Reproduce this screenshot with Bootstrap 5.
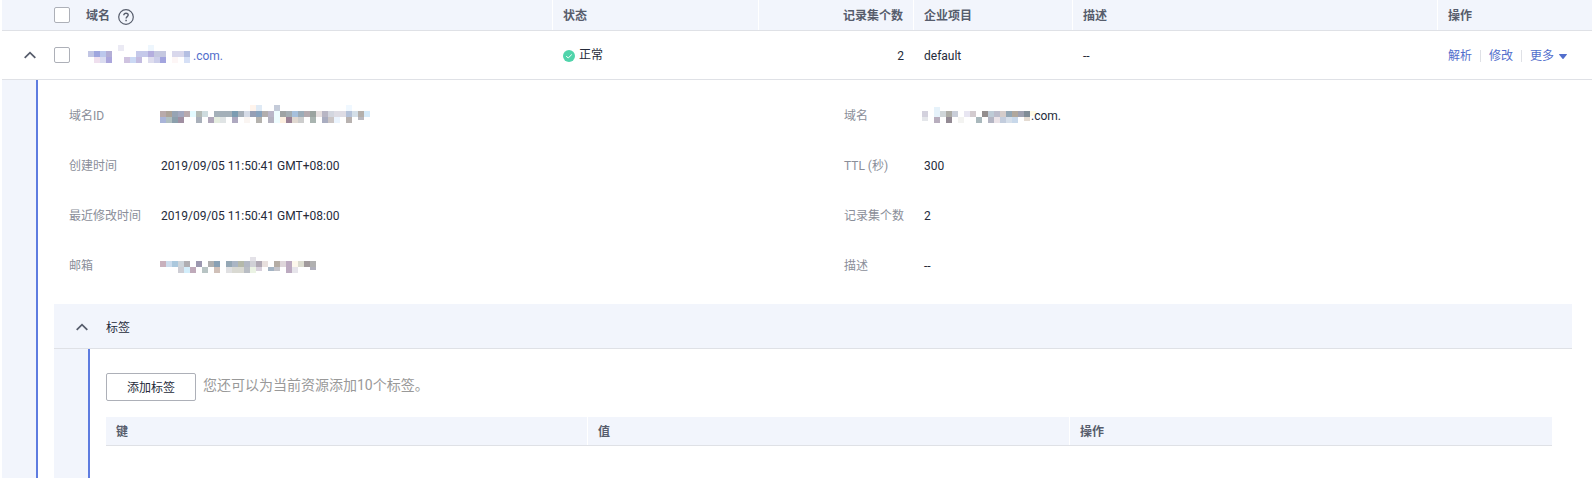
<!DOCTYPE html>
<html lang="zh-CN">
<head>
<meta charset="utf-8">
<meta name="viewport" content="width=device-width, initial-scale=1">
<title>域名</title>
<link href="https://cdn.jsdelivr.net/npm/bootstrap@5.3.0/dist/css/bootstrap.min.css" rel="stylesheet">
<style>
body{font:12px/18px Roboto,"Noto Sans CJK SC",sans-serif;color:#252b3a;background:#fff}
.page{height:478px;padding:0 2px}
.zone-grid{display:grid;grid-template-columns:42px 32px 477px 206px 155px 159px 365px 154px}
.tag-grid{display:grid;grid-template-columns:482px 482px 482px}
.head-row{background:#f2f5fc;color:#575d6c;font-weight:700;border-bottom:1px solid #dfe1e6}
.head-row>*{border-right:1px solid #fff;padding:2px 10px 0}
.head-row>.plain,.head-row>:last-child{border-right:0}
.head-row>.plain{padding-top:0}
.zone-grid.head-row{height:31px}
.data-row{height:49px;border-bottom:1px solid #dfe1e6}
.data-row>*{padding:2px 10px 0}
.data-row>.control{padding-top:0}
.state{margin-top:-2px}
.tag-grid.head-row{height:29px}
.form-check-input.box{width:16px;height:16px;margin:0;border:1px solid #adb0b8;border-radius:2px;background-color:#fff;flex:none}
.gutter{width:36px;background:#f2f5fc;border-right:2px solid #5e7ce0}
a{color:#526ecc;text-decoration:none}
.vline{width:1px;height:12px;background:#dfe1e6;margin:0 8px}
.info{display:grid;grid-template-columns:92px 683px 80px 1fr;grid-auto-rows:50px;padding:11px 0 0 31px;height:224px}
.info>*{display:flex;align-items:center}
.info>.key{color:#8a8e99}
.tag-panel{margin:0 20px 0 16px}
.tag-head{height:45px;background:#f2f5fc;border-bottom:1px solid #dfe1e6;padding:2px 0 0 22px;gap:18px}
.tag-head span{padding-top:2px}
.tag-body{padding:24px 20px 0 16px}
.btn.add-btn{width:90px;height:28px;font-size:12px;line-height:18px;padding:2px 0 0;border:1px solid #adb0b8;border-radius:2px;color:#252b3a}
.hint{font-size:14px;line-height:20px;color:#999;margin:2px 0 0 7px}
svg{display:block;flex:none}
.help-icon{margin-top:1px}
.mosaic{shape-rendering:crispEdges;overflow:visible;margin:0 0 4px -1px}
#m-name{margin-left:2px}
#m-domain{margin-left:-2px}
</style>
</head>
<body>
<div class="page d-flex flex-column overflow-hidden">
  <div class="zone-grid head-row align-items-stretch">
    <div class="plain"></div>
    <div class="plain d-flex align-items-center"><input class="form-check-input box" type="checkbox" aria-label="全选"></div>
    <div class="d-flex align-items-center gap-2"><span>域名</span>
      <svg class="help-icon" width="16" height="16" viewBox="0 0 16 16" fill="none" stroke="#575d6c" stroke-width="1.2"><circle cx="8" cy="8" r="7.3"/><path d="M5.8 6.3C5.8 5 6.7 4.2 8 4.2s2.2.8 2.2 1.9c0 1.5-2.1 1.6-2.1 3.3" stroke-width="1.4"/><path d="M8.1 10.7v1.5" stroke-width="1.5"/></svg></div>
    <div class="d-flex align-items-center">状态</div>
    <div class="d-flex align-items-center justify-content-end">记录集个数</div>
    <div class="d-flex align-items-center">企业项目</div>
    <div class="d-flex align-items-center">描述</div>
    <div class="d-flex align-items-center">操作</div>
  </div>
  <div class="zone-grid data-row">
    <div class="control d-flex align-items-center justify-content-end pe-2"><svg width="12" height="8" viewBox="0 0 12 8" fill="none" stroke="#575d6c" stroke-width="1.8"><path d="M.7 6.8 6 1.7l5.3 5.1"/></svg></div>
    <div class="control d-flex align-items-center"><input class="form-check-input box" type="checkbox" aria-label="选择"></div>
    <div class="d-flex align-items-center"><svg class="mosaic" id="m-name" width="105" height="18"></svg><a href="#">.com.</a></div>
    <div class="d-flex align-items-center"><svg width="12" height="12" viewBox="0 0 12 12" class="me-1"><circle cx="6" cy="6" r="6" fill="#50d4ab"/><path d="m3.2 6 2 2 3.6-3.5" fill="none" stroke="#fff" stroke-width="1"/></svg><span class="state">正常</span></div>
    <div class="d-flex align-items-center justify-content-end">2</div>
    <div class="d-flex align-items-center">default</div>
    <div class="d-flex align-items-center">--</div>
    <div class="d-flex align-items-center"><a href="#">解析</a><span class="vline"></span><a href="#">修改</a><span class="vline"></span><a href="#" class="d-flex align-items-center">更多<svg width="9" height="5" viewBox="-1 0 9 5" class="ms-1"><path d="M.4 0h7.2q.5.3.2.8L4.5 4.7q-.5.4-1 0L.2.8Q-.1.3.4 0z" fill="#526ecc"/></svg></a></div>
  </div>
  <div class="d-flex flex-grow-1">
    <div class="gutter flex-shrink-0"></div>
    <div class="flex-grow-1 d-flex flex-column">
      <div class="info">
        <div class="key">域名ID</div><div><svg class="mosaic" id="m-id" width="210" height="18"></svg></div>
        <div class="key">域名</div><div><svg class="mosaic" id="m-domain" width="109" height="18"></svg>.com.</div>
        <div class="key">创建时间</div><div>2019/09/05 11:50:41 GMT+08:00</div>
        <div class="key">TTL (秒)</div><div>300</div>
        <div class="key">最近修改时间</div><div>2019/09/05 11:50:41 GMT+08:00</div>
        <div class="key">记录集个数</div><div>2</div>
        <div class="key">邮箱</div><div><svg class="mosaic" id="m-mail" width="158" height="18"></svg></div>
        <div class="key">描述</div><div>--</div>
      </div>
      <div class="tag-panel flex-grow-1 d-flex flex-column">
        <div class="tag-head d-flex align-items-center"><svg width="12" height="8" viewBox="0 0 12 8" fill="none" stroke="#575d6c" stroke-width="1.8"><path d="M.7 6.8 6 1.7l5.3 5.1"/></svg><span>标签</span></div>
        <div class="d-flex flex-grow-1">
          <div class="gutter flex-shrink-0"></div>
          <div class="tag-body flex-grow-1">
            <div class="d-flex align-items-start mb-3"><button class="btn add-btn" type="button">添加标签</button><p class="hint">您还可以为当前资源添加10个标签。</p></div>
            <div class="tag-grid head-row">
              <div class="d-flex align-items-center">键</div>
              <div class="d-flex align-items-center">值</div>
              <div class="d-flex align-items-center">操作</div>
            </div>
          </div>
        </div>
      </div>
    </div>
  </div>
</div>
<script src="https://cdn.jsdelivr.net/npm/bootstrap@5.3.0/dist/js/bootstrap.bundle.min.js"></script>
<script>
// Redaction mosaics: three rows of 6px cells. "-" leaves a cell empty, "-n" skips n cells,
// "/h" sets the height of a partly covered cell.
const mosaics = {
  'm-name': ['-5 ebeaf4 -4 eef6fd',
    'c2c6e4 9fa6de bcc8ec b3aed6 -4 c5c9ea c5c9ea b4aede c5c8e0 c5c8e0 - d9d8ec d9d8ec b4bfe2',
    '- efdfee dadcf0 aba6dc -2 cfc3e0 cbd9f4 c3bce0 - deddee ccceea a2a4de - fdf6f6 - d6e0f6'],
  'm-id': ['-15 fff4ec dfeaf5 -2 c4cbd9 -11 f0f8ff',
    'b8aaaa aca398 97a4b4 a2a8bf b8aaae e4fbff b4bbb6 cedcdf - a4b0b9 a4b0b9 a4b0b9 7c9cb2 a7b0ba d5dbe7 969fb5 87a2bd b2aeae bab6c8 effdff 9ea3a3 a3adb2 a6c0dc 9cacb8 b4aaaf 9aa39f e6dfdf b8b6c4 d3d6df dedce4 dedce4 b4c2d9 d4dfe8 b4b0ac d5ebfb',
    'a9b4d8 b0bfc0 8b9fac a08fa2 -2 a9b0ba - b0a7ba e5ede0 e0e4e5 - aea9c0 - faf5f2 - b4b2ae - b4b2c0 effdff fdf0e0 9b8295 e0d8d0 cdcdcd - a9b4b0 - a9adc0 cbc5c5 ebf4fe - b8b2b0 - b9b9c0/3'],
  'm-domain': ['-2 e6f2fa/4',
    'd3d1dd - e6f2fa cfd5d8 adaca6 c9ced9 - e8e6f2 d3cbcf - 938e8e becbd6 bcbccb d4ccca 92a6b4 b0a79c 9fa1b0 808c96 fffbe6/5',
    'e4e6ea/4 - b8aebe - 938a94 - f3f3f1 -2 a9b8bc - b4b5c3 ebe3e8 c3cddd d6dfea c8d8ea - e4dbd2/4'],
  'm-mail': ['-15 e4e2e8/4',
    'c8b0bc cbdced abc8dd cdd4da b0aeb2 - 9c98b0 - b0b0b0 88a0b4 - 94a7b5 aab5c4 b5b9aa b3b8c4 d0d0d6 b0a8b4 e8e0de - b4aca4 ded6da bcaac0 fdf8ec dcdcd0 a19a9c b0b0b0',
    '-3 cdcdd4 d3eefb bfaaba - b8c4c4 - d0c0b8 - e0e0e2 d9d9d2 d9d9d2 b9bdc4 ebf3e4 d8d0dc/4 - a4b4c4/4 c4c4ca/4 - bcaac0 e6e4ea -2 b0b0bc/3']
};
for (const [id, rows] of Object.entries(mosaics)) {
  let out = '';
  rows.forEach((row, r) => {
    let c = 0;
    for (const t of row.split(' ')) {
      if (t[0] === '-') { c += +t.slice(1) || 1; continue; }
      const [col, part] = t.split('/');
      const h = +part || 6;
      const y = r === 0 ? 6 - h : r * 6;
      out += `<rect x="${c * 6}" y="${y}" width="6" height="${h}" fill="#${col}"/>`;
      c++;
    }
  });
  document.getElementById(id).innerHTML = out;
}
</script>
</body>
</html>
